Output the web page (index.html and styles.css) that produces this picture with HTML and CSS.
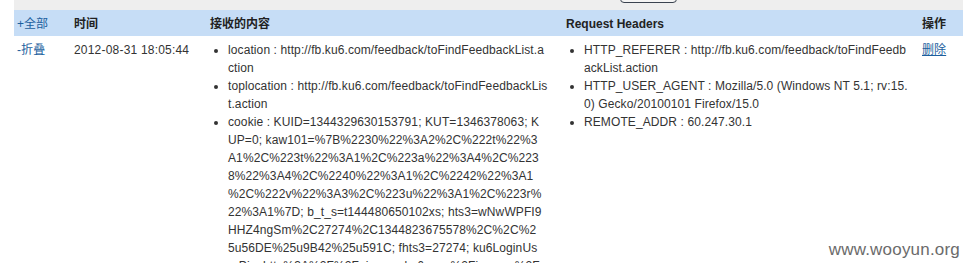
FILE: index.html
```html
<!DOCTYPE html>
<html>
<head>
<meta charset="utf-8">
<link rel="stylesheet" href="styles.css">
</head>
<body>
<div class="page">
  <div class="toolbar"><span class="tbtn"></span></div>
  <table class="grid">
    <colgroup>
      <col class="c1"><col class="c2"><col class="c3"><col class="c4"><col class="c5">
    </colgroup>
    <thead>
      <tr>
        <th class="th-link"><a href="#">+全部</a></th>
        <th>时间</th>
        <th>接收的内容</th>
        <th class="th-en">Request Headers</th>
        <th>操作</th>
      </tr>
    </thead>
    <tbody>
      <tr>
        <td><a href="#" class="fold">-折叠</a></td>
        <td class="date">2012-08-31 18:05:44</td>
        <td>
          <ul class="kv">
            <li>location : http://fb.ku6.com/feedback/toFindFeedbackList.action</li>
            <li>toplocation : http://fb.ku6.com/feedback/toFindFeedbackList.action</li>
            <li>cookie : KUID=1344329630153791; KUT=1346378063; K<br>UP=0; kaw101=%7B%2230%22%3A2%2C%222t%22%3<br>A1%2C%223t%22%3A1%2C%223a%22%3A4%2C%223<br>8%22%3A4%2C%2240%22%3A1%2C%2242%22%3A1<br>%2C%222v%22%3A3%2C%223u%22%3A1%2C%223r%<br>22%3A1%7D; b_t_s=t144480650102xs; hts3=wNwWPFI9<br>HHZ4ngSm%2C27274%2C1344823675578%2C%2C%2<br>5u56DE%25u9B42%25u591C; fhts3=27274; ku6LoginUs<br>erPic=http%3A%2F%2Fpicsapp.ku6.com%2Fimages%2F<br>default.jpg</li>
          </ul>
        </td>
        <td>
          <ul class="kv kv-wide">
            <li>HTTP_REFERER : http://fb.ku6.com/feedback/toFindFeedbackList.action</li>
            <li>HTTP_USER_AGENT : Mozilla/5.0 (Windows NT 5.1; rv:15.0) Gecko/20100101 Firefox/15.0</li>
            <li>REMOTE_ADDR : 60.247.30.1</li>
          </ul>
        </td>
        <td><a href="#" class="del">删除</a></td>
      </tr>
    </tbody>
  </table>
</div>
<div class="watermark">www.wooyun.org</div>
</body>
</html>
```

FILE: styles.css
```css
html, body {
  margin: 0;
  padding: 0;
  background: #fff;
  overflow: hidden;
}
body {
  font-family: "Liberation Sans", Arial, "Noto Sans CJK SC", sans-serif;
  font-size: 12px;
  letter-spacing: 0.1px;
  color: #333;
  position: relative;
  height: 263px;
}
.page {
  margin-left: 14px;
  width: 960px;
}
.toolbar {
  height: 10px;
  background: #eeeeee;
  position: relative;
  overflow: hidden;
}
.tbtn {
  position: absolute;
  left: 606px;
  top: -20px;
  width: 55px;
  height: 21px;
  border: 1px solid #3a4350;
  border-radius: 4px;
  background: #f4f4f4;
}
.grid {
  border-collapse: collapse;
  table-layout: fixed;
  width: 960px;
}
.c1 { width: 52px; }
.c2 { width: 136px; }
.c3 { width: 356px; }
.c4 { width: 356px; }
.c5 { width: 60px; }
.grid th {
  background: #c6ddf6;
  height: 25px;
  padding: 1px 0 0 8px;
  text-align: left;
  font-weight: bold;
  color: #222;
  font-size: 12px;
  line-height: 24px;
  white-space: nowrap;
  letter-spacing: 0;
}
.grid th.th-link {
  padding-left: 3px;
  font-weight: normal;
}
.grid th.th-link a {
  color: #1c5f9e;
  text-decoration: none;
}
.grid td {
  vertical-align: top;
  padding: 5px 0 0 8px;
  line-height: 18px;
}
.grid td:first-child {
  padding-left: 3px;
}
.fold {
  color: #1c5f9e;
  text-decoration: none;
}
.date {
  color: #333;
  letter-spacing: 0.2px;
}
.kv {
  margin: 0;
  padding: 0 8px 0 18px;
  list-style: disc;
}
.kv-wide {
  padding-right: 3px;
}
.kv li {
  word-break: break-all;
  line-height: 18px;
}
.del {
  color: #1c5f9e;
  text-decoration: underline;
}
.watermark {
  position: absolute;
  right: 3px;
  top: 240px;
  font-family: "Liberation Sans", Arial, sans-serif;
  font-size: 17px;
  letter-spacing: 0.2px;
  color: #6b6b6b;
  background: rgba(255,255,255,0.6);
}
```
